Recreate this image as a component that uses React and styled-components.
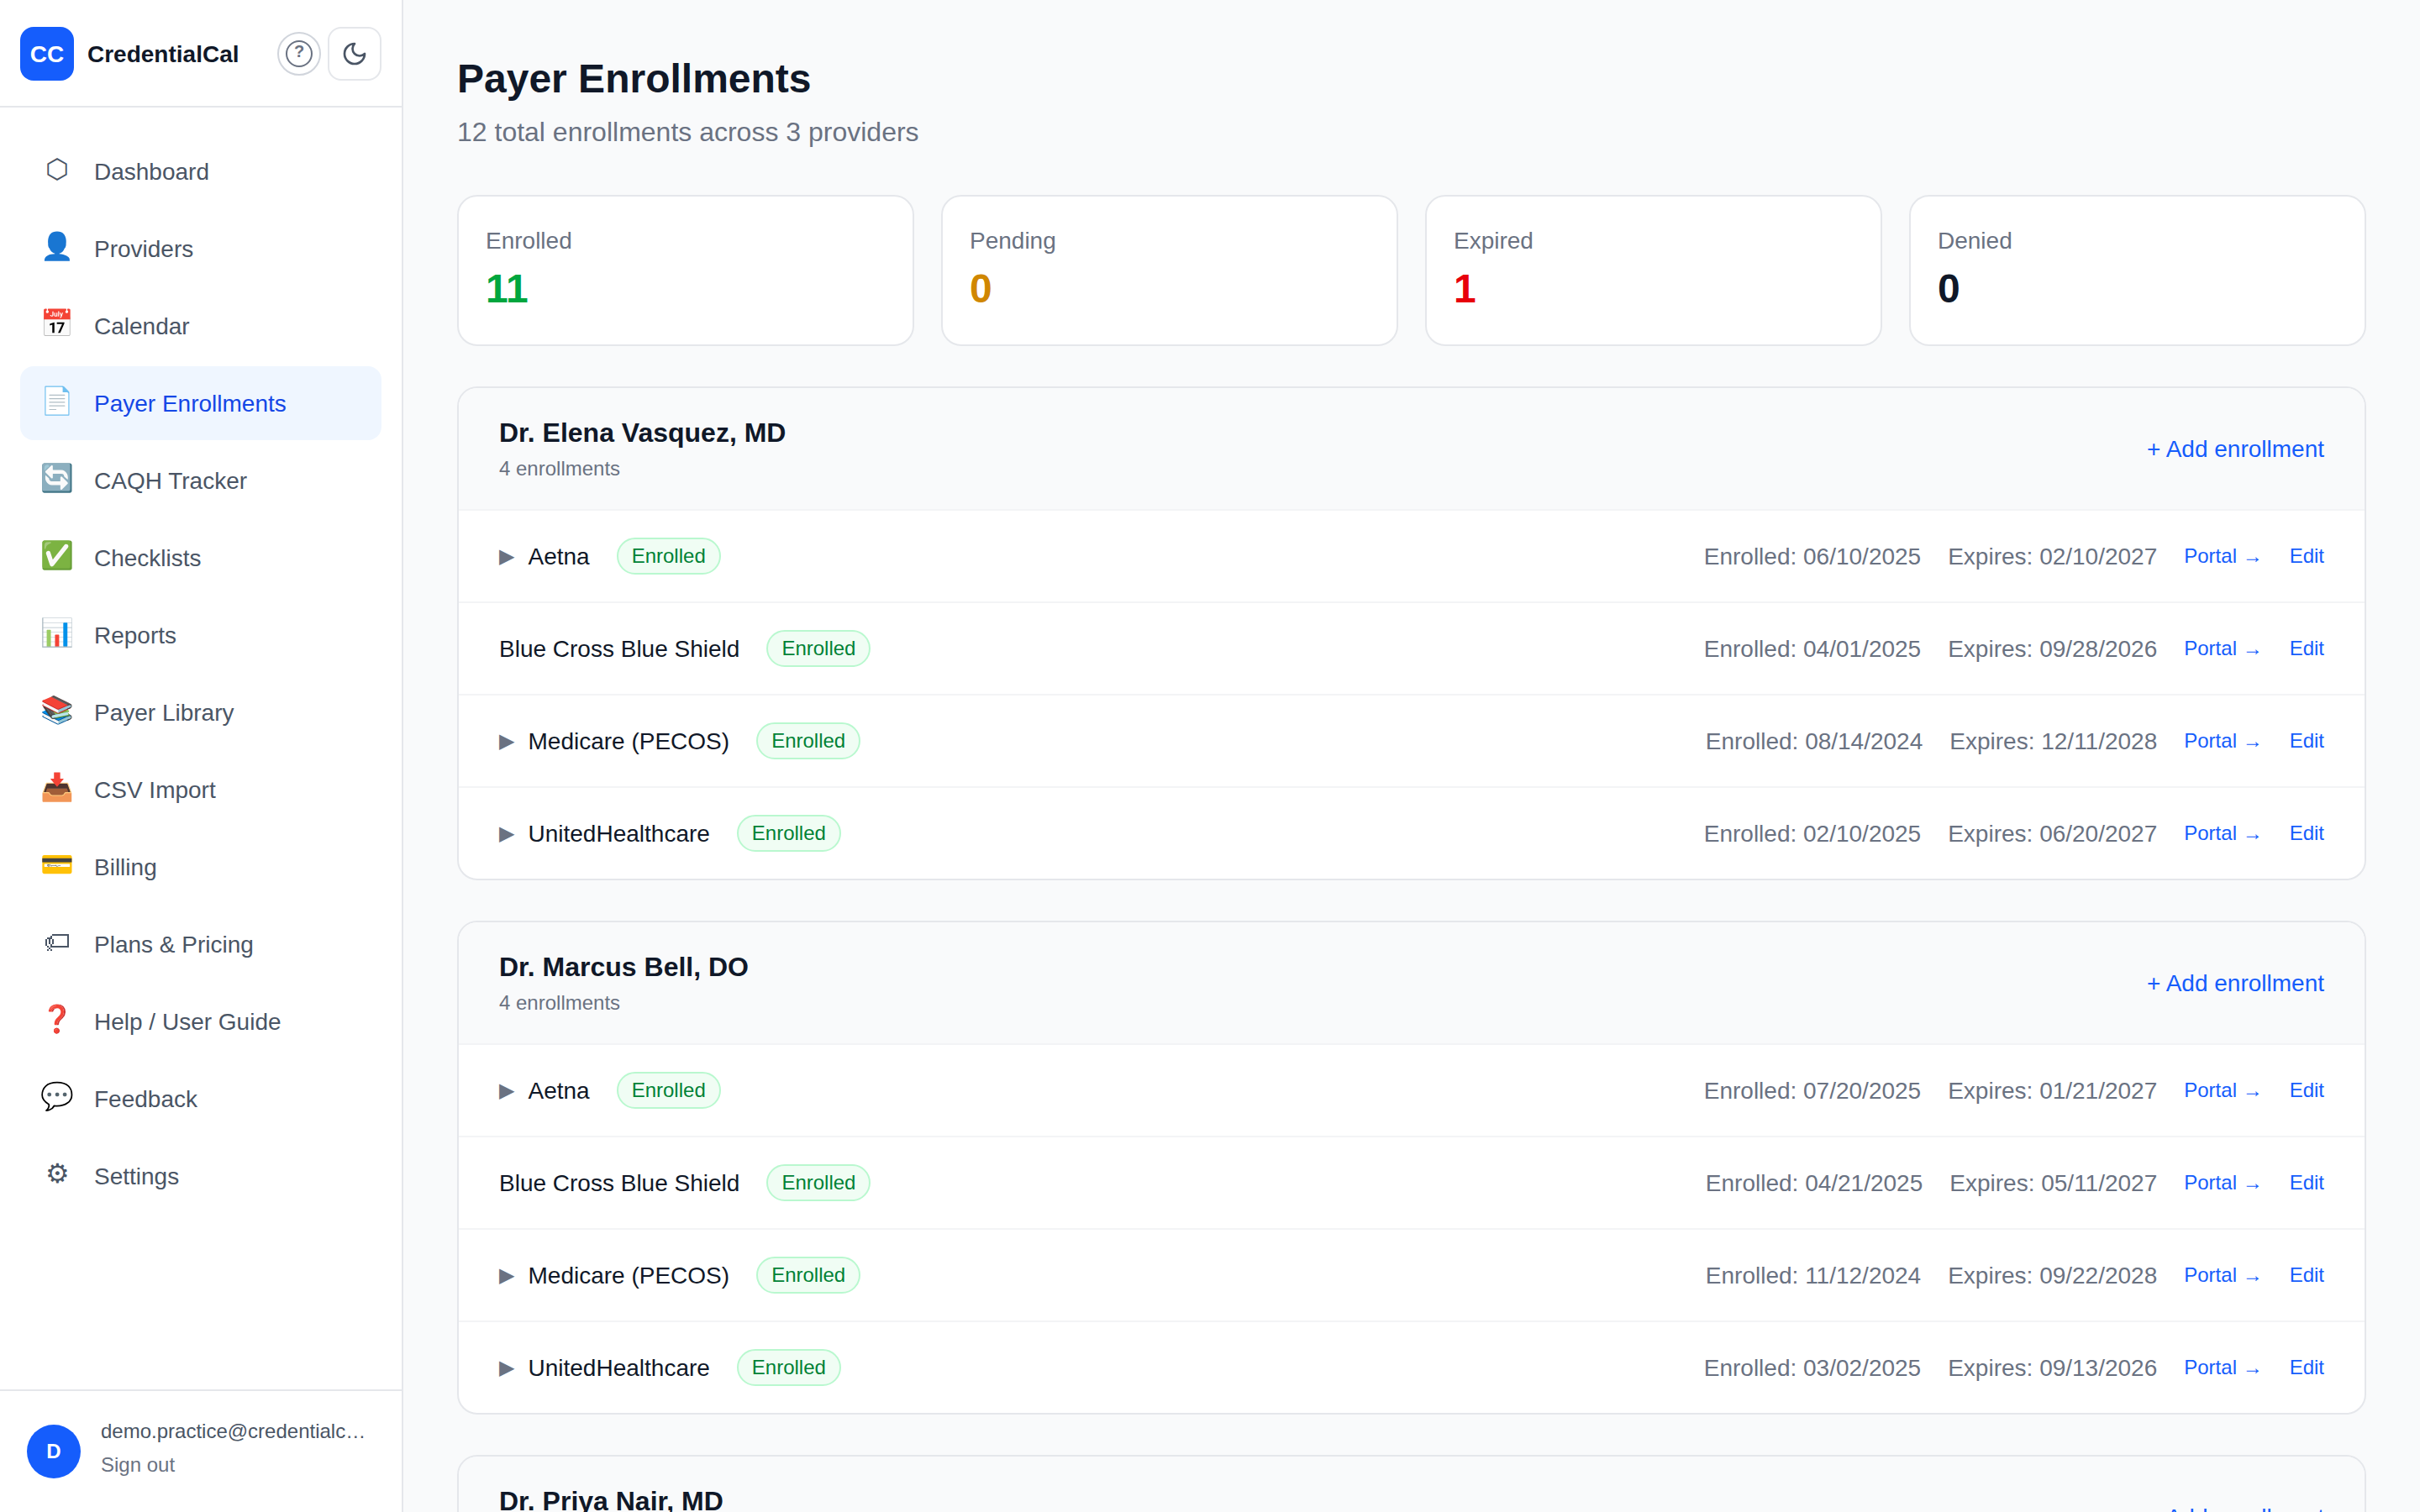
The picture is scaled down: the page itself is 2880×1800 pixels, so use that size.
import React, { useState } from 'react';
import styled, { createGlobalStyle } from 'styled-components';

const colors = {
  blue: '#155dfc',
  blueDark: '#1447e6',
  blueLight: '#eff6ff',
  page: '#f9fafb',
  line: '#e5e7eb',
  lineLight: '#f3f4f6',
  ring: '#d1d5dc',
  muted: '#6a7282',
  text: '#4a5565',
  heading: '#101828',
  green: '#00a63e',
  yellow: '#d08700',
  red: '#e7000b',
};

const GlobalStyle = createGlobalStyle`
  * {
    box-sizing: border-box;
  }
  body {
    margin: 0;
    overflow: hidden;
    background-color: ${colors.page};
    color: ${colors.heading};
    font-family: "Liberation Sans", Arial, sans-serif;
    font-size: 32px;
    line-height: 48px;
  }
  button {
    margin: 0;
    padding: 0;
    border: none;
    background: none;
    font: inherit;
    color: inherit;
    cursor: pointer;
  }
`;

const Layout = styled.div`
  display: flex;
  height: 100vh;
`;

const Sidebar = styled.aside`
  display: flex;
  flex-direction: column;
  flex: none;
  width: 480px;
  background-color: #fff;
  border-right: 2px solid ${colors.line};
`;

const Brand = styled.div`
  display: flex;
  align-items: center;
  gap: 16px;
  height: 128px;
  padding: 2px 24px 0;
  border-bottom: 2px solid ${colors.line};
`;

const BrandLogo = styled.div`
  display: flex;
  align-items: center;
  justify-content: center;
  width: 64px;
  height: 64px;
  padding-top: 1px;
  border-radius: 16px;
  background-color: ${colors.blue};
  color: #fff;
  font-size: 28px;
  line-height: 40px;
  font-weight: bold;
`;

const BrandName = styled.span`
  flex: 1;
  padding-top: 1px;
  font-size: 28px;
  line-height: 40px;
  font-weight: bold;
`;

const BrandButtons = styled.div`
  display: flex;
  align-items: center;
  gap: 8px;
`;

const HelpButton = styled.button`
  display: flex;
  align-items: center;
  justify-content: center;
  width: 52px;
  height: 52px;
  border: 2px solid ${colors.ring};
  border-radius: 50%;
`;

const HelpMark = styled.span`
  display: flex;
  justify-content: center;
  width: 32px;
  height: 32px;
  border: 2px solid ${colors.muted};
  border-radius: 50%;
  color: ${colors.muted};
  font-size: 20px;
  line-height: 22px;
  font-weight: bold;
`;

const ThemeButton = styled.button`
  display: flex;
  align-items: center;
  justify-content: center;
  width: 64px;
  height: 64px;
  border: 2px solid ${colors.line};
  border-radius: 16px;
  color: ${colors.text};
`;

const Nav = styled.nav`
  display: flex;
  flex-direction: column;
  flex: 1;
  gap: 4px;
  padding: 32px 24px;
`;

const NavItem = styled.a`
  display: flex;
  align-items: center;
  gap: 24px;
  height: 88px;
  padding: 0 24px;
  border-radius: 16px;
  cursor: pointer;
  color: ${props => (props.$active ? colors.blueDark : colors.text)};
  background-color: ${props => (props.$active ? colors.blueLight : 'transparent')};
`;

const NavIcon = styled.span`
  display: flex;
  align-items: center;
  justify-content: center;
  width: 40px;
  padding-bottom: 6px;
  svg {
    margin-top: 2px;
  }
`;

const NavLabel = styled.span`
  padding-top: 1px;
  font-size: 28px;
  line-height: 40px;
`;

const Account = styled.div`
  display: flex;
  align-items: center;
  gap: 24px;
  height: 146px;
  padding: 0 32px;
  border-top: 2px solid ${colors.line};
`;

const Avatar = styled.div`
  display: flex;
  align-items: center;
  justify-content: center;
  flex: none;
  width: 64px;
  height: 64px;
  border-radius: 50%;
  background-color: ${colors.blue};
  color: #fff;
  font-size: 24px;
  font-weight: bold;
`;

const AccountText = styled.div`
  display: flex;
  flex-direction: column;
  align-items: flex-start;
  flex: 1;
  min-width: 0;
  font-size: 24px;
`;

const Email = styled.div`
  width: 100%;
  overflow: hidden;
  text-overflow: ellipsis;
  white-space: nowrap;
  line-height: 32px;
  color: ${colors.text};
`;

const SignOut = styled.button`
  line-height: 48px;
  color: ${colors.muted};
`;

const Main = styled.main`
  flex: 1;
  overflow: hidden;
  padding: 64px;
`;

const Title = styled.h1`
  margin: 0;
  font-size: 48px;
  line-height: 60px;
`;

const Subtitle = styled.p`
  margin: 8px 0 50px;
  line-height: 50px;
  color: ${colors.muted};
`;

const Stats = styled.div`
  display: grid;
  grid-template-columns: repeat(4, 1fr);
  gap: 32px;
`;

const StatCard = styled.div`
  height: 180px;
  padding: 32px;
  background-color: #fff;
  border: 2px solid ${colors.line};
  border-radius: 24px;
`;

const StatLabel = styled.div`
  font-size: 28px;
  line-height: 41px;
  color: ${colors.muted};
`;

const StatValue = styled.div`
  margin-top: 7px;
  font-size: 48px;
  line-height: 60px;
  font-weight: bold;
  color: ${props => props.$color};
`;

const Group = styled.section`
  margin-top: 48px;
  overflow: hidden;
  background-color: #fff;
  border: 2px solid ${colors.line};
  border-radius: 24px;
`;

const GroupHeader = styled.div`
  display: flex;
  align-items: center;
  justify-content: space-between;
  padding: 32px 48px;
  background-color: ${colors.page};
  border-bottom: 2px solid ${colors.lineLight};
`;

const ProviderName = styled.h2`
  margin: 0;
  font-size: 32px;
  line-height: 42px;
`;

const ProviderCount = styled.div`
  margin-top: 6px;
  font-size: 24px;
  line-height: 32px;
  color: ${colors.muted};
`;

const AddButton = styled.button`
  padding-top: 1px;
  font-size: 28px;
  line-height: 40px;
  color: ${colors.blue};
`;

const Row = styled.div`
  display: flex;
  align-items: center;
  justify-content: space-between;
  padding: 32px 48px;
  & + & {
    border-top: 2px solid ${colors.lineLight};
  }
`;

const RowSide = styled.div`
  display: flex;
  align-items: center;
  gap: 32px;
  height: 44px;
`;

const Payer = styled.div`
  display: flex;
  align-items: center;
  gap: 16px;
`;

const RowText = styled.span`
  padding-top: 1px;
  font-size: 28px;
  line-height: 40px;
  color: ${props => (props.$muted ? colors.muted : colors.heading)};
`;

const Expand = styled.button`
  width: 18.5px;
  font-size: 24px;
  line-height: 32px;
  color: ${colors.muted};
`;

const Badge = styled.span`
  height: 44px;
  padding: 4px 16px;
  border: 2px solid #b9f8cf;
  border-radius: 22px;
  background-color: #f0fdf4;
  color: #008236;
  font-size: 24px;
  line-height: 32px;
`;

const RowLink = styled.a`
  font-size: 24px;
  line-height: 32px;
  color: ${colors.blue};
  cursor: pointer;
`;

// price tag on a 14x10 grid, one string per row
const tagPixels = [
  '....##########',
  '...#.........#',
  '.###.........#',
  '#.#.#........#',
  '#.#.#........#',
  '#.#.#........#',
  '#..#.........#',
  '.#.###########',
  '..#...........',
  '.#.#..........',
];

const TagIcon = () => (
  <svg width="28" height="20" viewBox="0 0 14 10" fill="currentColor" shapeRendering="crispEdges">
    {tagPixels.map((line, y) =>
      line.split('').map((cell, x) => cell === '#' && <rect key={`${x}-${y}`} x={x} y={y} width="1" height="1" />)
    )}
  </svg>
);

const MoonIcon = () => (
  <svg width="32" height="32" viewBox="0 0 24 24" fill="none" stroke="currentColor" strokeWidth="2" strokeLinecap="round" strokeLinejoin="round">
    <path d="M12 3a6 6 0 0 0 9 9 9 9 0 1 1-9-9Z" />
  </svg>
);

const navItems = [
  { icon: '⬡', label: 'Dashboard' },
  { icon: '👤', label: 'Providers' },
  { icon: '📅', label: 'Calendar' },
  { icon: '📄', label: 'Payer Enrollments' },
  { icon: '🔄', label: 'CAQH Tracker' },
  { icon: '✅', label: 'Checklists' },
  { icon: '📊', label: 'Reports' },
  { icon: '📚', label: 'Payer Library' },
  { icon: '📥', label: 'CSV Import' },
  { icon: '💳', label: 'Billing' },
  { icon: <TagIcon />, label: 'Plans & Pricing' },
  { icon: '❓', label: 'Help / User Guide' },
  { icon: '💬', label: 'Feedback' },
  { icon: '⚙', label: 'Settings' },
];

const stats = [
  { label: 'Enrolled', value: 11, color: colors.green },
  { label: 'Pending', value: 0, color: colors.yellow },
  { label: 'Expired', value: 1, color: colors.red },
  { label: 'Denied', value: 0, color: colors.heading },
];

const providers = [
  {
    name: 'Dr. Elena Vasquez, MD',
    enrollments: [
      { payer: 'Aetna', expandable: true, enrolled: '06/10/2025', expires: '02/10/2027' },
      { payer: 'Blue Cross Blue Shield', enrolled: '04/01/2025', expires: '09/28/2026' },
      { payer: 'Medicare (PECOS)', expandable: true, enrolled: '08/14/2024', expires: '12/11/2028' },
      { payer: 'UnitedHealthcare', expandable: true, enrolled: '02/10/2025', expires: '06/20/2027' },
    ],
  },
  {
    name: 'Dr. Marcus Bell, DO',
    enrollments: [
      { payer: 'Aetna', expandable: true, enrolled: '07/20/2025', expires: '01/21/2027' },
      { payer: 'Blue Cross Blue Shield', enrolled: '04/21/2025', expires: '05/11/2027' },
      { payer: 'Medicare (PECOS)', expandable: true, enrolled: '11/12/2024', expires: '09/22/2028' },
      { payer: 'UnitedHealthcare', expandable: true, enrolled: '03/02/2025', expires: '09/13/2026' },
    ],
  },
  { name: 'Dr. Priya Nair, MD', enrollments: [] },
];

const EnrollmentRow = ({ payer, expandable, enrolled, expires }) => (
  <Row>
    <RowSide>
      <Payer>
        {expandable && <Expand>▶</Expand>}
        <RowText>{payer}</RowText>
      </Payer>
      <Badge>Enrolled</Badge>
    </RowSide>
    <RowSide>
      <RowText $muted>Enrolled: {enrolled}</RowText>
      <RowText $muted>Expires: {expires}</RowText>
      <RowLink>Portal →</RowLink>
      <RowLink>Edit</RowLink>
    </RowSide>
  </Row>
);

const App = () => {
  const [current, setCurrent] = useState('Payer Enrollments');

  return (
    <Layout>
      <GlobalStyle />
      <Sidebar>
        <Brand>
          <BrandLogo>CC</BrandLogo>
          <BrandName>CredentialCal</BrandName>
          <BrandButtons>
            <HelpButton>
              <HelpMark>?</HelpMark>
            </HelpButton>
            <ThemeButton>
              <MoonIcon />
            </ThemeButton>
          </BrandButtons>
        </Brand>
        <Nav>
          {navItems.map(item => (
            <NavItem key={item.label} $active={item.label === current} onClick={() => setCurrent(item.label)}>
              <NavIcon>{item.icon}</NavIcon>
              <NavLabel>{item.label}</NavLabel>
            </NavItem>
          ))}
        </Nav>
        <Account>
          <Avatar>D</Avatar>
          <AccountText>
            <Email>demo.practice@credentialcal.com</Email>
            <SignOut>Sign out</SignOut>
          </AccountText>
        </Account>
      </Sidebar>
      <Main>
        <Title>Payer Enrollments</Title>
        <Subtitle>12 total enrollments across 3 providers</Subtitle>
        <Stats>
          {stats.map(stat => (
            <StatCard key={stat.label}>
              <StatLabel>{stat.label}</StatLabel>
              <StatValue $color={stat.color}>{stat.value}</StatValue>
            </StatCard>
          ))}
        </Stats>
        {providers.map(provider => (
          <Group key={provider.name}>
            <GroupHeader>
              <div>
                <ProviderName>{provider.name}</ProviderName>
                <ProviderCount>4 enrollments</ProviderCount>
              </div>
              <AddButton>+ Add enrollment</AddButton>
            </GroupHeader>
            {provider.enrollments.map(enrollment => (
              <EnrollmentRow key={enrollment.payer} {...enrollment} />
            ))}
          </Group>
        ))}
      </Main>
    </Layout>
  );
};

export default App;
